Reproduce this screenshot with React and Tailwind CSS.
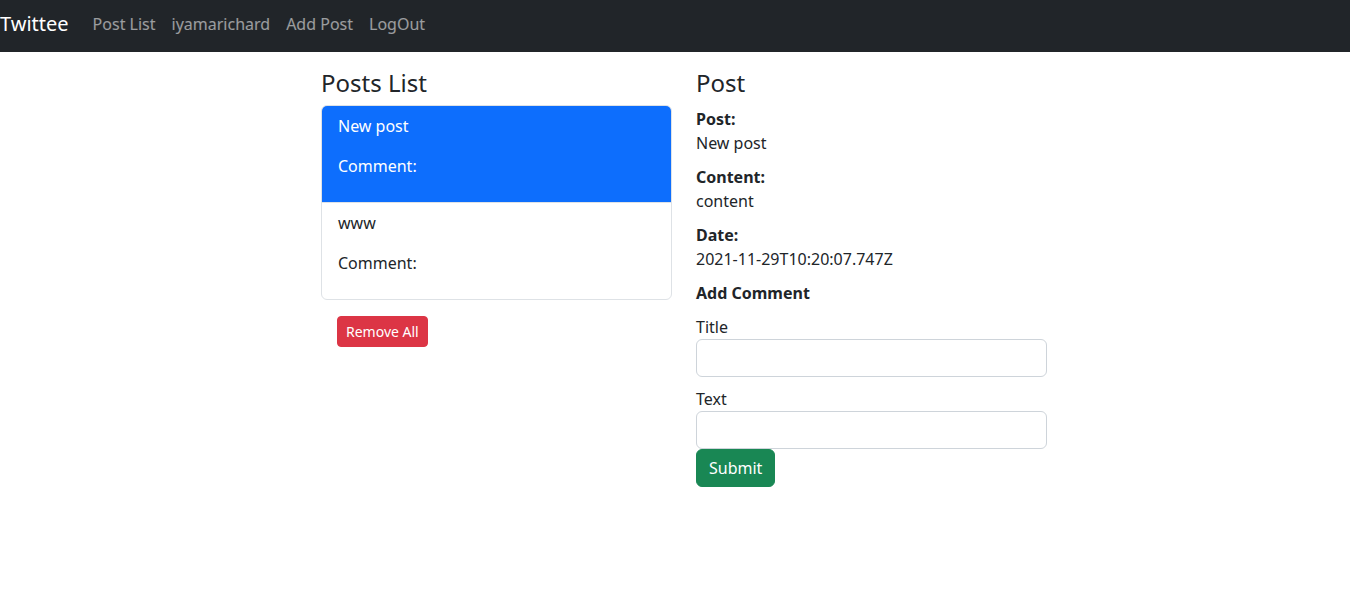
export default function App() {
    const posts = [
        { title: "New post", active: true },
        { title: "www", active: false },
    ];

    return (
        <div className="min-h-[616px] bg-white text-[#212529] text-base leading-6 font-['Noto_Sans',sans-serif]">
            <nav className="h-[52px] bg-[#212529] flex items-center pb-1">
                <a className="text-white text-xl leading-[30px] mr-4">Twittee</a>
                <div className="flex">
                    {["Post List", "iyamarichard", "Add Post", "LogOut"].map((l) => (
                        <a key={l} className="px-2 text-white/55">
                            {l}
                        </a>
                    ))}
                </div>
            </nav>

            <div className="flex gap-6 pl-[321px] pt-4">
                <div className="w-[351px]">
                    <h4 className="text-2xl leading-[29px] mb-2">Posts List</h4>
                    <ul className="border border-[#dee2e6] rounded-md overflow-hidden">
                        {posts.map((p, i) => (
                            <li
                                key={i}
                                className={
                                    p.active
                                        ? "bg-[#0d6efd] text-white px-4 py-2"
                                        : "px-4 py-2 border-t border-[#dee2e6]"
                                }
                            >
                                <div>{p.title}</div>
                                <p className="my-4">Comment:</p>
                            </li>
                        ))}
                    </ul>
                    <button className="m-4 bg-[#dc3545] border border-[#dc3545] text-white text-sm leading-[21px] px-2 py-1 rounded">
                        Remove All
                    </button>
                </div>

                <div className="w-[351px]">
                    <h4 className="text-2xl leading-[29px] mb-2">Post</h4>
                    <div className="pt-0.5 mb-2.5">
                        <div className="font-bold">Post:</div>
                        <div>New post</div>
                    </div>
                    <div className="mb-2.5">
                        <div className="font-bold">Content:</div>
                        <div>content</div>
                    </div>
                    <div className="mb-2.5">
                        <div className="font-bold">Date:</div>
                        <div>2021-11-29T10:20:07.747Z</div>
                    </div>
                    <div className="font-bold mb-2.5">Add Comment</div>
                    <div className="mb-2.5">
                        <label className="block">Title</label>
                        <input className="block w-full h-[38px] border border-[#ced4da] rounded-md px-3" />
                    </div>
                    <div>
                        <label className="block">Text</label>
                        <input className="block w-full h-[38px] border border-[#ced4da] rounded-md px-3" />
                    </div>
                    <button className="bg-[#198754] border border-[#198754] text-white px-3 h-[38px] rounded-md">
                        Submit
                    </button>
                </div>
            </div>
        </div>
    );
}
